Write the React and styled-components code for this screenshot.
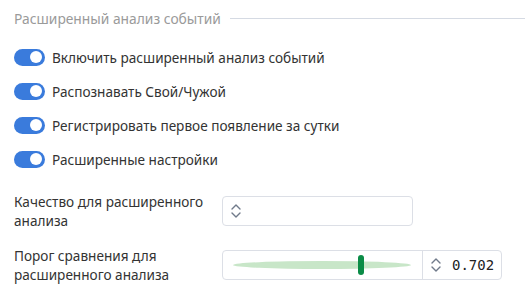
import React from "react";
import styled, { createGlobalStyle } from "styled-components";

const Global = createGlobalStyle`
  body {
    margin: 0;
    background: #fff;
    font-family: "Noto Sans", "Open Sans", sans-serif;
  }
`;

const Panel = styled.div`
  width: 532px;
  padding: 7px 7px 0 14px;
  box-sizing: border-box;
`;

const Legend = styled.div`
  display: flex;
  align-items: center;
  gap: 9px;
  height: 22px;
  font-size: 13.8px;
  color: #9a9a9a;
  margin-bottom: 11px;
`;

const Line = styled.div`
  flex: 1;
  height: 1px;
  background: #d5dae3;
`;

const ToggleRow = styled.label`
  display: flex;
  align-items: center;
  gap: 7px;
  height: 34px;
  font-size: 13.6px;
  color: #333;
`;

const Track = styled.span`
  width: 31px;
  height: 17px;
  border-radius: 9px;
  background: ${({ on }) => (on ? "#3a7bdc" : "#c8c8c8")};
  position: relative;
  flex: none;
`;

const Knob = styled.span`
  position: absolute;
  top: 2.5px;
  right: ${({ on }) => (on ? "3px" : "auto")};
  left: ${({ on }) => (on ? "auto" : "3px")};
  width: 12px;
  height: 12px;
  border-radius: 50%;
  background: #fff;
`;

const Form = styled.div`
  display: grid;
  grid-template-columns: 208px 1fr;
  row-gap: 16px;
  margin-top: 16px;
  align-items: center;
`;

const Label = styled.div`
  font-size: 13.6px;
  line-height: 19px;
  color: #333;
  padding-right: 10px;
`;

const Box = styled.div`
  display: flex;
  align-items: center;
  height: 30px;
  width: ${({ w }) => w}px;
  border: 1px solid #dcdfe6;
  border-radius: 4px;
  box-sizing: border-box;
  background: #fff;
`;

const Spin = styled.span`
  display: flex;
  align-items: center;
  padding-left: ${({ pad }) => pad}px;
  color: #707a8a;
`;

const SliderArea = styled.div`
  position: relative;
  width: 200px;
  height: 100%;
  display: flex;
  align-items: center;
  padding: 0 11px 0 10px;
  box-sizing: border-box;
  border-right: 1px solid #dcdfe6;
`;

const Rail = styled.div`
  flex: 1;
  height: 8px;
  border-radius: 50%;
  background: #c8e6c8;
`;

const Thumb = styled.div`
  position: absolute;
  top: 4px;
  left: ${({ pos }) => pos}px;
  width: 6px;
  height: 20px;
  border-radius: 3px;
  background: #0b8c47;
`;

const Value = styled.span`
  font-family: "DejaVu Sans Mono", "Liberation Mono", monospace;
  font-size: 14px;
  color: #222;
  margin-left: 10px;
`;

function Chevrons() {
  return (
    <svg width="12" height="18" viewBox="0 0 12 18" fill="none" stroke="currentColor" strokeWidth="1.4" strokeLinecap="round" strokeLinejoin="round">
      <path d="M2 7 L6 3 L10 7" />
      <path d="M2 11 L6 15 L10 11" />
    </svg>
  );
}

const toggles = [
  "Включить расширенный анализ событий",
  "Распознавать Свой/Чужой",
  "Регистрировать первое появление за сутки",
  "Расширенные настройки",
];

export default function App() {
  return (
    <Panel>
      <Global />
      <Legend>
        Расширенный анализ событий
        <Line />
      </Legend>
      {toggles.map((t) => (
        <ToggleRow key={t}>
          <Track on>
            <Knob on />
          </Track>
          {t}
        </ToggleRow>
      ))}
      <Form>
        <Label>Качество для расширенного анализа</Label>
        <Box w={191}>
          <Spin pad={7}>
            <Chevrons />
          </Spin>
        </Box>
        <Label>Порог сравнения для расширенного анализа</Label>
        <Box w={280}>
          <SliderArea>
            <Rail />
            <Thumb pos={135} />
          </SliderArea>
          <Spin pad={7}>
            <Chevrons />
          </Spin>
          <Value>0.702</Value>
        </Box>
      </Form>
    </Panel>
  );
}
